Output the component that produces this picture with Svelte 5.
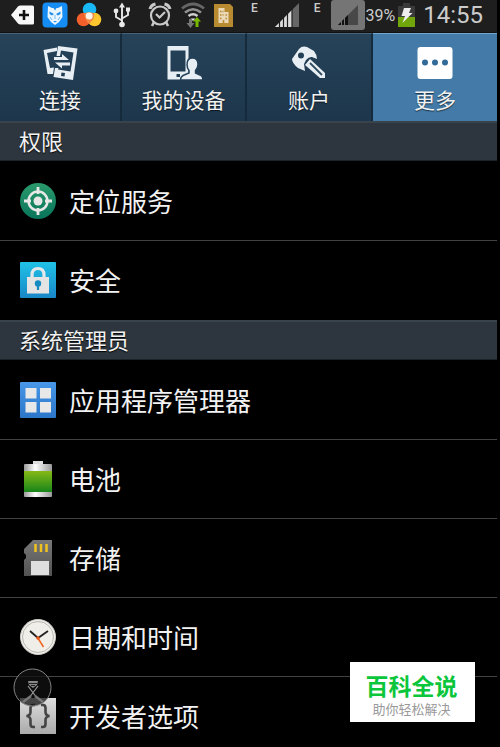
<script>
  const tabs = [
    { id: 'connect', label: '连接' },
    { id: 'device', label: '我的设备' },
    { id: 'account', label: '账户' },
    { id: 'more', label: '更多' }
  ];
  const sections = [
    {
      title: '权限',
      rows: [
        { id: 'location', label: '定位服务' },
        { id: 'security', label: '安全' }
      ]
    },
    {
      title: '系统管理员',
      rows: [
        { id: 'apps', label: '应用程序管理器' },
        { id: 'battery', label: '电池' },
        { id: 'storage', label: '存储' },
        { id: 'date', label: '日期和时间' },
        { id: 'developer', label: '开发者选项' }
      ]
    }
  ];
  let active = $state('more');
</script>

<div class="screen">
  <header class="status">
    <div class="group">
      <svg width="24" height="20" viewBox="0 0 24 20">
        <path d="M1 10 8 1.5Q9 .5 10.500 .5H22.500Q24 .5 24 2V18Q24 19.500 22.500 19.500H10.500Q9 19.500 8 18.500Z" fill="#f8f8f8" />
        <path d="M14 5v10M9 10h10" stroke="#111" stroke-width="2.600" />
      </svg>
      <svg width="26" height="26" viewBox="0 0 26 26">
        <rect x=".5" y=".5" width="25" height="25" rx="4" fill="#158df5" />
        <path d="M6 4 10 6H16L20 4 20.500 15 17 20 13 23 9 20 5.500 15Z" fill="#e9f5ff" />
        <path d="M7.500 9.500 12 12 10 13.500 7.500 12ZM18.500 9.500 14 12 16 13.500 18.500 12ZM11 19h4l-2 1.500ZM11.500 6l1.500 2.500L14.500 6" fill="#258ee6" />
        <path d="M13 13v4M8 15l2 3M18 15l-2 3" stroke="#73bbf5" fill="none" />
      </svg>
      <svg width="26" height="26" viewBox="0 0 26 26">
        <circle cx="13.500" cy="7.500" r="6.800" fill="#18b9f6" />
        <circle cx="7.500" cy="17.500" r="6.800" fill="#f4602c" />
        <circle cx="18.500" cy="17.500" r="6.800" fill="#fdc52e" />
        <path d="M8 11.500Q13 9 18.500 11.500L17.500 17Q15 20 13 22 9 18 8 11.500Z" fill="#f38743" />
        <circle cx="13.200" cy="14" r="3.500" fill="#fff3e7" />
      </svg>
      <svg width="24" height="26" viewBox="0 0 24 26" fill="none" stroke="#e8e8e8" stroke-width="1.900">
        <path d="M12 3v19M12 18.500 6 15V9M12 16.500l6-3.500V8" />
        <path d="M12 .5 9 5.500h6Z" fill="#e8e8e8" stroke="none" />
        <circle cx="6" cy="9" r="2.400" fill="#e8e8e8" stroke="none" />
        <rect x="16" y="5.500" width="4" height="4" fill="#e8e8e8" stroke="none" />
        <circle cx="12" cy="22.500" r="2.800" fill="#e8e8e8" stroke="none" />
      </svg>
    </div>
    <div class="group system">
      <svg width="24" height="26" viewBox="0 0 24 26" fill="none" stroke="#c9c9c9" stroke-width="2.200">
        <circle cx="12" cy="13.500" r="9" />
        <path d="M2 7Q3 3 7.500 2M22 7Q21 3 16.500 2" stroke-width="3" />
        <path d="m8 12 3.500 3.500L17 10" />
        <path d="m6 20-2 4M18 20l2 4" stroke-width="2.600" />
      </svg>
      <svg width="26" height="26" viewBox="0 0 26 26" fill="none">
        <path d="M2 6.500Q13-2.500 24 6.500" stroke="#666" stroke-width="2.700" />
        <path d="M5 10.500Q13 4 21 10.500" stroke="#929292" stroke-width="2.600" />
        <path d="M8.500 14Q13 10.500 17.500 14" stroke="#d0d0d0" stroke-width="2.400" />
        <path d="m10.500 16.500h5L13 19Z" fill="#ddd" />
        <path d="M9 17v4H6.500l4 5 4-5H12v-4Z" fill="#777" />
        <path d="M15.500 25v-5.500H13l4-4.500 4 4.500h-2.500V25Z" fill="#76b900" />
      </svg>
      <svg width="19" height="23" viewBox="0 0 19 23">
        <path d="M0 0H16L19 3V23H0Z" fill="#b98b31" />
        <path d="M4.500 4h6v4h4v11h-10Z" fill="#e9d9b7" />
        <path d="M6 7.500h1.500M8.500 7.500h1M6 11h1.500M8.500 11h1M6 14.500h1.500M11.500 11h1.500M11.500 14.500h1.500M9.500 16v3" stroke="#b98b31" stroke-width="1.600" />
      </svg>
    </div>
    <div class="group radio">
      <span class="net">E</span>
      <svg width="24" height="24" viewBox="0 0 24 24">
        <path d="M0 24 24 0V24Z" fill="#666" />
        <path d="M0 24 17 7V24Z" fill="#ddd" />
        <path d="M4.500 17v7M8.500 13v11M12.500 9v15M17 5v19" stroke="#1e1e1e" stroke-width="1.200" />
      </svg>
      <span class="net second">E</span>
      <svg class="sim" width="34" height="30" viewBox="0 0 34 30">
        <rect width="34" height="30" rx="3" fill="#757575" />
        <path d="M7 25 27 5V25Z" fill="#484848" />
        <path d="M7 25 17 15V25Z" fill="#111" />
        <path d="M10.500 20v6M13.500 17v9" stroke="#757575" />
      </svg>
      <span class="percent">39%</span>
      <svg class="cell" width="17" height="24" viewBox="0 0 17 24">
        <path d="M0 3H5V0H12V3H17V24H0Z" fill="#3a3a3a" />
        <path d="M0 14H17V24H0Z" fill="#70a60b" />
        <path d="M6 5h7l-2 5h3.500L4.500 20 7 13H3.500Z" fill="#eee" />
      </svg>
      <time>14:55</time>
    </div>
  </header>

  <div class="tabs" role="tablist">
    {#each tabs as tab (tab.id)}
      <button class="tab" class:active={active === tab.id} role="tab" aria-selected={active === tab.id} onclick={() => (active = tab.id)}>
        <svg width="36" height="36" viewBox="0 0 36 36" fill="none">
          {#if tab.id === 'connect'}
            <path d="M1.500 6 15 3.500V7L5 9 8 24 12 23.500 11 30 5.500 30Z" fill="#e8eff4" />
            <path fill-rule="evenodd" d="M16 2 35.500 4.500 31 36 11.500 33 13 24H16.500L16 25.500 28.500 27.500 31.500 8.500 19 6.500 18 12H14.500ZM19.500 28.500 19 32 22.500 32.500 23 29Z" fill="#e8eff4" />
            <path d="M12 13H20V10L27 16H12ZM28 18.500H13L20 24.500V21.500H28Z" fill="#e8eff4" />
          {:else if tab.id === 'device'}
            <path fill-rule="evenodd" d="M1.500 2H22.500V35.500H1.500ZM4.500 6.500V27.500H19.500V6.500ZM10.500 30v3h3.500v-3Z" fill="#e8eff4" />
            <path d="M21 20.500Q21 14 26.500 14T32 20.500Q32 24 29.500 26.500V29L35 31.500Q37 33 37 36H14.500Q14.500 33 17 31.500L23 29V26.500Q21 24 21 20.500Z" fill="#e8eff4" stroke="#25425a" stroke-width="1.500" />
          {:else if tab.id === 'account'}
            <path fill-rule="evenodd" d="M1 15 8 5Q11 1.500 16 3L23 7Q25.500 10 26 15L21 13Q18 12.500 15 16L13 20 14 27 7 24Q1 19 1 15ZM10 8.500A3 3 0 1 0 10 14.500A3 3 0 1 0 10 8.500Z" fill="#e8eff4" />
            <path d="M19 15 34 29V34H29L14 21Z" fill="#e8eff4" />
            <path d="m19 19 12 12" stroke="#314b5e" stroke-width="1.800" />
          {:else}
            <rect x=".5" y="3" width="35" height="32" rx="3" fill="#fff" />
            <circle cx="8" cy="18.500" r="3" fill="#326b98" />
            <circle cx="18" cy="18.500" r="3" fill="#326b98" />
            <circle cx="28" cy="18.500" r="3" fill="#326b98" />
          {/if}
        </svg>
        <span>{tab.label}</span>
      </button>
    {/each}
  </div>

  <main>
    {#each sections as section (section.title)}
      <section>
        <h2>{section.title}</h2>
        <ul>
          {#each section.rows as row (row.id)}
            <li>
              <a href={'#' + row.id}>
                <svg width="36" height="36" viewBox="0 0 36 36" fill="none">
                  {#if row.id === 'location'}
                    <circle cx="18" cy="18" r="18" fill="url(#green)" />
                    <circle cx="18" cy="18" r="9.500" stroke="#e8e8e8" stroke-width="2.500" />
                    <circle cx="18" cy="18" r="4.500" fill="#e8e8e8" />
                    <path d="M18 4v7M18 25v7M4 18h7M25 18h7" stroke="#e8e8e8" stroke-width="2.800" />
                  {:else if row.id === 'security'}
                    <rect width="36" height="36" rx="1" fill="url(#cyan)" />
                    <path d="M12 16V13Q12 6.500 18 6.500T24 13V16" stroke="#e4e8ea" stroke-width="3.200" />
                    <path d="M7 15H29V31.500H7Z" fill="#e4e4e4" />
                    <circle cx="18" cy="21.500" r="3.200" fill="#168bc2" />
                    <path d="M18 22v6" stroke="#168bc2" stroke-width="2.200" />
                  {:else if row.id === 'apps'}
                    <rect width="36" height="36" rx="1" fill="url(#blue)" />
                    <path d="M5.500 6H16.500V16.500H5.500ZM20 6H31V16.500H20ZM5.500 20H16.500V30.500H5.500ZM20 20H31V30.500H20Z" fill="#e8e8e8" />
                  {:else if row.id === 'battery'}
                    <path d="M13 0H23V4H13Z" fill="#ddd" />
                    <rect x="4" y="3" width="28" height="33" rx="1" fill="url(#metal)" />
                    <path d="M4 10H32V31H4Z" fill="url(#charge)" />
                  {:else if row.id === 'storage'}
                    <path d="M13 0H32V36H4V20L6 18V15L4 13V9Z" fill="url(#card)" />
                    <path d="M15.500 4v8M21 4v8M26.500 4v8" stroke="#efc31f" stroke-width="2.500" />
                    <path d="M11 21H29V35H11Z" fill="#dedede" />
                  {:else if row.id === 'date'}
                    <circle cx="18" cy="18" r="17.500" fill="#f3f1ed" stroke="#cfccc7" />
                    <circle cx="18" cy="18" r="15.500" fill="#f0eee8" stroke="#bbb8b1" />
                    <path d="m10 12 8 7 10-7" stroke="#222" stroke-width="1.800" />
                    <path d="m17.500 18.500 6 9.500" stroke="#f06a24" stroke-width="1.600" />
                    <circle cx="18" cy="19" r="1.800" fill="#e9571b" />
                  {:else}
                    <rect width="36" height="36" fill="url(#grey)" />
                    <path d="M15 7H13Q10.500 7 10.500 10V14Q10.500 17.500 6.500 18Q10.500 18.500 10.500 22V26Q10.500 29 13 29H15M21 7H23Q25.500 7 25.500 10V14Q25.500 17.500 29.500 18Q25.500 18.500 25.500 22V26Q25.500 29 23 29H21" stroke="#444" stroke-width="2.600" />
                  {/if}
                </svg>
                <span>{row.label}</span>
              </a>
            </li>
          {/each}
        </ul>
      </section>
    {/each}
  </main>

  <svg class="bubble" width="40" height="40" viewBox="0 0 40 40" fill="none" aria-hidden="true">
    <circle cx="20.500" cy="19.500" r="18.500" fill="#111" fill-opacity=".75" stroke="#858585" />
    <path d="M16 13h10l-1 4-4 3-4-3Z" fill="#888" />
    <path d="M17 15.500h8M19 17.500h4" stroke="#222" />
    <path d="m16 18 9 12M26 18 17 30" stroke="#999" stroke-width="1.200" />
    <path d="m11 34 8-6M31 34l-8-6" stroke="#777" stroke-width="2.500" />
  </svg>
  <aside class="badge">
    <strong>百科全说</strong>
    <span>助你轻松解决</span>
  </aside>

  <svg class="defs" width="0" height="0" aria-hidden="true">
    <defs>
      <linearGradient id="green" x2="0" y2="1"><stop stop-color="#2a9a6b" /><stop offset="1" stop-color="#08745b" /></linearGradient>
      <linearGradient id="cyan" x2="0" y2="1"><stop stop-color="#20c2e6" /><stop offset="1" stop-color="#1887c8" /></linearGradient>
      <linearGradient id="blue" x2="0" y2="1"><stop stop-color="#4897e8" /><stop offset="1" stop-color="#2b76c8" /></linearGradient>
      <linearGradient id="metal"><stop stop-color="#999" /><stop offset=".4" stop-color="#fff" /><stop offset="1" stop-color="#999" /></linearGradient>
      <linearGradient id="charge" x2="0" y2="1"><stop stop-color="#86b916" /><stop offset="1" stop-color="#17851a" /></linearGradient>
      <linearGradient id="card" x2="0" y2="1"><stop stop-color="#777" /><stop offset="1" stop-color="#525252" /></linearGradient>
      <linearGradient id="grey" x2="0" y2="1"><stop stop-color="#dedede" /><stop offset="1" stop-color="#aaa" /></linearGradient>
    </defs>
  </svg>
</div>

<style>
  :global(body) {
    margin: 0;
    background: #000;
  }
  .screen {
    position: relative;
    box-sizing: border-box;
    height: 100vh;
    padding-right: 3px;
    overflow: hidden;
    background: #000;
    color: #f2f2f2;
    font-family: "Noto Sans CJK SC", sans-serif;
  }
  svg {
    display: block;
    flex: none;
  }
  .status {
    display: flex;
    align-items: center;
    height: 32px;
    padding: 0 14px 2px 10px;
    box-sizing: border-box;
    background: #1e1e1e;
    font-family: Roboto, sans-serif;
    color: #ccc;
  }
  .group {
    display: flex;
    align-items: center;
    gap: 8px;
  }
  .system {
    margin-left: 14px;
  }
  .radio {
    margin-left: auto;
    gap: 0;
  }
  .net {
    align-self: flex-start;
    margin-right: 17px;
    font-size: 12px;
    line-height: 16px;
    font-weight: 500;
  }
  .second {
    margin-left: 15px;
    margin-right: 10px;
  }
  .percent {
    margin-left: 1px;
    font-size: 16px;
  }
  .cell {
    margin: 0 8px 0 3px;
  }
  time {
    font-size: 24px;
    line-height: 30px;
  }
  .tabs {
    display: grid;
    grid-template-columns: 122fr 125fr 126fr 124fr;
    height: 89px;
    box-sizing: border-box;
    border-top: 1px solid #111;
  }
  .tab {
    display: flex;
    flex-direction: column;
    align-items: center;
    padding: 10px 0 0;
    gap: 4px;
    border: 0;
    border-top: 1px solid #48647a;
    border-right: 2px solid #152a3b;
    background: linear-gradient(#26435a, #1d364b);
    color: #f2f2f2;
    font-family: inherit;
    font-size: 21px;
    line-height: 30px;
    text-shadow: 0 1px 1px #0009;
  }
  .tab.active {
    background: #437aa7;
    border-top-color: #75a6cc;
    border-right: 0;
  }
  h2 {
    box-sizing: border-box;
    height: 40px;
    margin: 0;
    padding-left: 19px;
    border-top: 2px solid #38434c;
    border-bottom: 1px solid #1c2328;
    background: #2d363e;
    font-size: 22px;
    font-weight: 400;
    line-height: 35px;
    text-shadow: 0 1px 1px #000;
  }
  ul {
    margin: 0;
    padding: 1px 0 0;
    list-style: none;
  }
  li {
    border-bottom: 1px solid #424242;
  }
  section:first-child li:last-child {
    border-color: #000;
  }
  a {
    display: flex;
    align-items: center;
    gap: 13px;
    height: 78px;
    padding-left: 20px;
    color: #f2f2f2;
    font-size: 26px;
    line-height: 36px;
    text-decoration: none;
  }
  .bubble {
    position: absolute;
    left: 12px;
    top: 668px;
  }
  .badge {
    position: absolute;
    right: 25px;
    bottom: 25px;
    display: flex;
    flex-direction: column;
    align-items: center;
    box-sizing: border-box;
    width: 125px;
    height: 60px;
    padding: 6px 2px 0 0;
    background: #fff;
  }
  .badge strong {
    color: #0bc63b;
    font-size: 23px;
    font-weight: 700;
    line-height: 34px;
  }
  .badge span {
    color: #999;
    font-size: 13px;
    line-height: 14px;
  }
  .defs {
    position: absolute;
  }
</style>
